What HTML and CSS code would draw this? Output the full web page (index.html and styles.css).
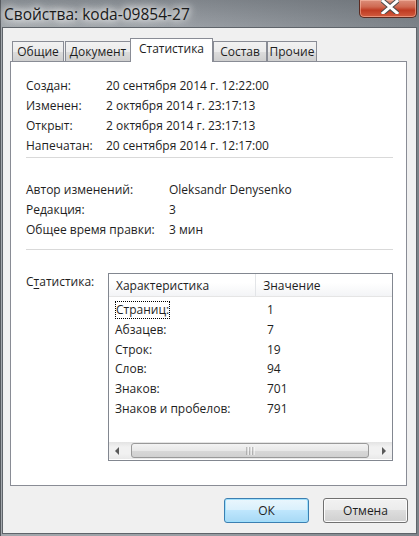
FILE: index.html
```html
<!DOCTYPE html>
<html lang="ru">
<head>
<meta charset="utf-8">
<title>Свойства: koda-09854-27</title>
<link rel="stylesheet" href="styles.css">
</head>
<body>
<div class="window">
  <div class="titlebar">
    <div class="title">Свойства: koda-09854-27</div>
    <div class="close">
      <svg width="18" height="14" viewBox="0 0 18 14"><path d="M2 1 L16 13 M16 1 L2 13" stroke="#4a4a4a" stroke-width="5" stroke-linecap="square"/><path d="M2 1 L16 13 M16 1 L2 13" stroke="#ffffff" stroke-width="3" stroke-linecap="square"/></svg>
    </div>
  </div>
  <div class="client">
    <div class="tabs">
      <div class="tab t1">Общие</div>
      <div class="tab t2">Документ</div>
      <div class="tab t3 selected">Статистика</div>
      <div class="tab t4">Состав</div>
      <div class="tab t5">Прочие</div>
    </div>
    <div class="panel">
      <div class="group g1">
        <div class="row"><span class="lbl">Создан:</span><span>20 сентября 2014 г. 12:22:00</span></div>
        <div class="row"><span class="lbl">Изменен:</span><span>2 октября 2014 г. 23:17:13</span></div>
        <div class="row"><span class="lbl">Открыт:</span><span>2 октября 2014 г. 23:17:13</span></div>
        <div class="row"><span class="lbl">Напечатан:</span><span>20 сентября 2014 г. 12:17:00</span></div>
      </div>
      <div class="sep sep1"></div>
      <div class="group g2">
        <div class="row"><span class="lbl">Автор изменений:</span><span>Oleksandr Denysenko</span></div>
        <div class="row"><span class="lbl">Редакция:</span><span>3</span></div>
        <div class="row"><span class="lbl">Общее время правки:</span><span>3 мин</span></div>
      </div>
      <div class="sep sep2"></div>
      <div class="stats">
        <div class="stats-label">С<u>т</u>атистика:</div>
        <div class="listview">
          <div class="lv-header">
            <div class="col c1">Характеристика</div>
            <div class="col c2">Значение</div>
            <div class="col c3"></div>
          </div>
          <div class="lv-body">
            <div class="lv-row"><span class="cell n"><span class="focus">Страниц:</span></span><span class="cell v">1</span></div>
            <div class="lv-row"><span class="cell n">Абзацев:</span><span class="cell v">7</span></div>
            <div class="lv-row"><span class="cell n">Строк:</span><span class="cell v">19</span></div>
            <div class="lv-row"><span class="cell n">Слов:</span><span class="cell v">94</span></div>
            <div class="lv-row"><span class="cell n">Знаков:</span><span class="cell v">701</span></div>
            <div class="lv-row"><span class="cell n">Знаков и пробелов:</span><span class="cell v">791</span></div>
          </div>
          <div class="hscroll">
            <div class="arrow">
              <svg width="5" height="8" viewBox="0 0 5 8"><path d="M4 0 L0 4 L4 8 Z" fill="#5a5a5a"/></svg>
            </div>
            <div class="thumb">
              <svg width="9" height="8" viewBox="0 0 9 8"><path d="M1 0 V8 M4 0 V8 M7 0 V8" stroke="#8a8a8a" stroke-width="1"/><path d="M2 0 V8 M5 0 V8 M8 0 V8" stroke="#ffffff" stroke-width="1"/></svg>
            </div>
            <div class="arrow">
              <svg width="5" height="8" viewBox="0 0 5 8"><path d="M1 0 L5 4 L1 8 Z" fill="#5a5a5a"/></svg>
            </div>
          </div>
        </div>
      </div>
    </div>
    <div class="buttons">
      <div class="btn default">ОК</div>
      <div class="btn">Отмена</div>
    </div>
  </div>
</div>
</body>
</html>
```

FILE: styles.css
```css
html, body {
  margin: 0;
  padding: 0;
}
body {
  width: 419px;
  height: 536px;
  overflow: hidden;
  font-family: "Open Sans", "Noto Sans", sans-serif;
  font-size: 12px;
  color: #1e1e1e;
}
.window {
  width: 419px;
  height: 536px;
  background: linear-gradient(90deg, #a3a8ad 0%, #9a9fa5 45%, #7d8389 100%);
  display: flex;
  flex-direction: column;
  box-sizing: border-box;
  border-left: 1px solid #55595e;
}
.titlebar {
  height: 27px;
  display: flex;
  align-items: flex-start;
  background: linear-gradient(180deg, rgba(80,86,92,0.35) 0%, rgba(255,255,255,0) 100%);
}
.title {
  font-family: "Open Sans", "Noto Sans", sans-serif;
  font-size: 15.5px;
  color: #1a1a1a;
  padding: 3px 0 0 3px;
  letter-spacing: 0;
  text-shadow: 0 0 6px #ffffff, 0 0 10px #ffffff, 0 0 14px rgba(255,255,255,0.8);
}
.close {
  margin-left: auto;
  margin-right: 2px;
  width: 58px;
  height: 18px;
  box-sizing: border-box;
  border: 1px solid #5b2b21;
  border-top: none;
  border-radius: 0 0 5px 5px;
  background: linear-gradient(180deg, #dc8e7a 0%, #cf6a52 40%, #bf3b22 60%, #d25c3f 100%);
  box-shadow: inset 0 0 0 1px rgba(255,200,180,0.5);
  display: flex;
  align-items: flex-start;
  justify-content: center;
}
.close svg {
  display: block;
  margin-left: 4px;
}
.client {
  margin: 0 2px 2px 1px;
  flex: 1;
  background: #f0f0f0;
  border: 1px solid #5f646a;
  display: flex;
  flex-direction: column;
  padding: 10px 9px 0 7px;
}
.tabs {
  display: flex;
  align-items: flex-end;
  height: 23px;
  padding-left: 2px;
  position: relative;
  z-index: 1;
}
.tab {
  box-sizing: border-box;
  height: 20px;
  border: 1px solid #898c95;
  border-bottom: none;
  background: linear-gradient(180deg, #f2f2f2 0%, #ebebeb 50%, #dddddd 51%, #cfcfcf 100%);
  text-align: center;
  line-height: 19px;
  white-space: nowrap;
  color: #1e1e1e;
}
.t1 { width: 52px; }
.t2 { width: 66px; margin-left: 1px; }
.t3 { width: 83px; margin-left: -1px; }
.t4 { width: 54px; }
.t5 { width: 50px; }
.tab.selected {
  height: 24px;
  margin-bottom: -1px;
  background: #ffffff;
  line-height: 20px;
  padding-bottom: 1px;
}
.panel {
  box-sizing: border-box;
  height: 425px;
  background: #ffffff;
  border: 1px solid #898c95;
  padding: 14px 13px 0 15px;
  display: flex;
  flex-direction: column;
}
.row {
  display: flex;
  height: 20px;
  line-height: 20px;
  white-space: nowrap;
}
.g1 .lbl { width: 80px; }
.g2 .lbl { width: 143px; }
.sep {
  height: 1px;
  background: #d9d9d9;
}
.sep1 { margin-top: 1px; }
.g2 { margin-top: 22px; }
.sep2 { margin-top: 9px; }
.stats {
  margin-top: 23px;
  display: flex;
}
.stats-label {
  width: 82px;
  line-height: 18px;
}
.stats-label u {
  text-underline-offset: 2px;
}
.listview {
  box-sizing: border-box;
  width: 285px;
  height: 188px;
  border: 1px solid #828790;
  display: flex;
  flex-direction: column;
  background: #ffffff;
}
.lv-header {
  display: flex;
  height: 23px;
  box-sizing: border-box;
  background: linear-gradient(180deg, #ffffff 0%, #ffffff 40%, #f3f4f6 100%);
  border-bottom: 1px solid #e5e5e5;
}
.col {
  box-sizing: border-box;
  line-height: 23px;
  padding-left: 7px;
  white-space: nowrap;
}
.c1 { width: 151px; border-right: 1px solid #e3e5e8; }
.c2 { width: 132px; }
.c3 { flex: 1; }
.lv-body {
  flex: 1;
  padding-top: 3px;
}
.lv-row {
  display: flex;
  height: 19.8px;
  line-height: 19.8px;
  white-space: nowrap;
}
.cell.n {
  width: 151px;
  padding-left: 6px;
  box-sizing: border-box;
}
.cell.v {
  padding-left: 7px;
}
.focus {
  outline: 1px dotted #000000;
  outline-offset: -1px;
  padding: 0 1px;
  display: inline-block;
  line-height: 17px;
  height: 18px;
  box-sizing: border-box;
  vertical-align: middle;
  margin-top: -1px;
}
.hscroll {
  height: 17px;
  display: flex;
  align-items: center;
  background: linear-gradient(180deg, #e3e3e3 0%, #f1f1f1 30%, #f1f1f1 70%, #e8e8e8 100%);
  margin-bottom: 1px;
}
.arrow {
  width: 17px;
  height: 17px;
  display: flex;
  align-items: center;
  justify-content: center;
}
.arrow svg { display: block; }
.thumb {
  flex: 1;
  height: 15px;
  margin: 0 6px 0 5px;
  box-sizing: border-box;
  border: 1px solid #999999;
  border-radius: 3px;
  background: linear-gradient(180deg, #f3f3f3 0%, #e8e8e8 50%, #d8d8d8 51%, #d0d0d0 100%);
  display: flex;
  align-items: center;
  justify-content: center;
}
.thumb svg { display: block; }
.buttons {
  display: flex;
  justify-content: flex-end;
  gap: 14px;
  margin-top: 12px;
  margin-right: -1px;
}
.btn {
  width: 85px;
  height: 25px;
  box-sizing: border-box;
  border: 1px solid #707070;
  border-radius: 3px;
  background: linear-gradient(180deg, #f2f2f2 0%, #ebebeb 49%, #dddddd 50%, #cfcfcf 100%);
  box-shadow: inset 0 0 0 1px #fcfcfc;
  text-align: center;
  line-height: 23px;
  color: #1e1e1e;
}
.btn.default {
  border-color: #3c7fb1;
  background: linear-gradient(180deg, #eaf6fd 0%, #d9f0fc 49%, #bee6fd 50%, #a7d9f5 100%);
  box-shadow: inset 0 0 0 1px #9fe0fd;
}
```
